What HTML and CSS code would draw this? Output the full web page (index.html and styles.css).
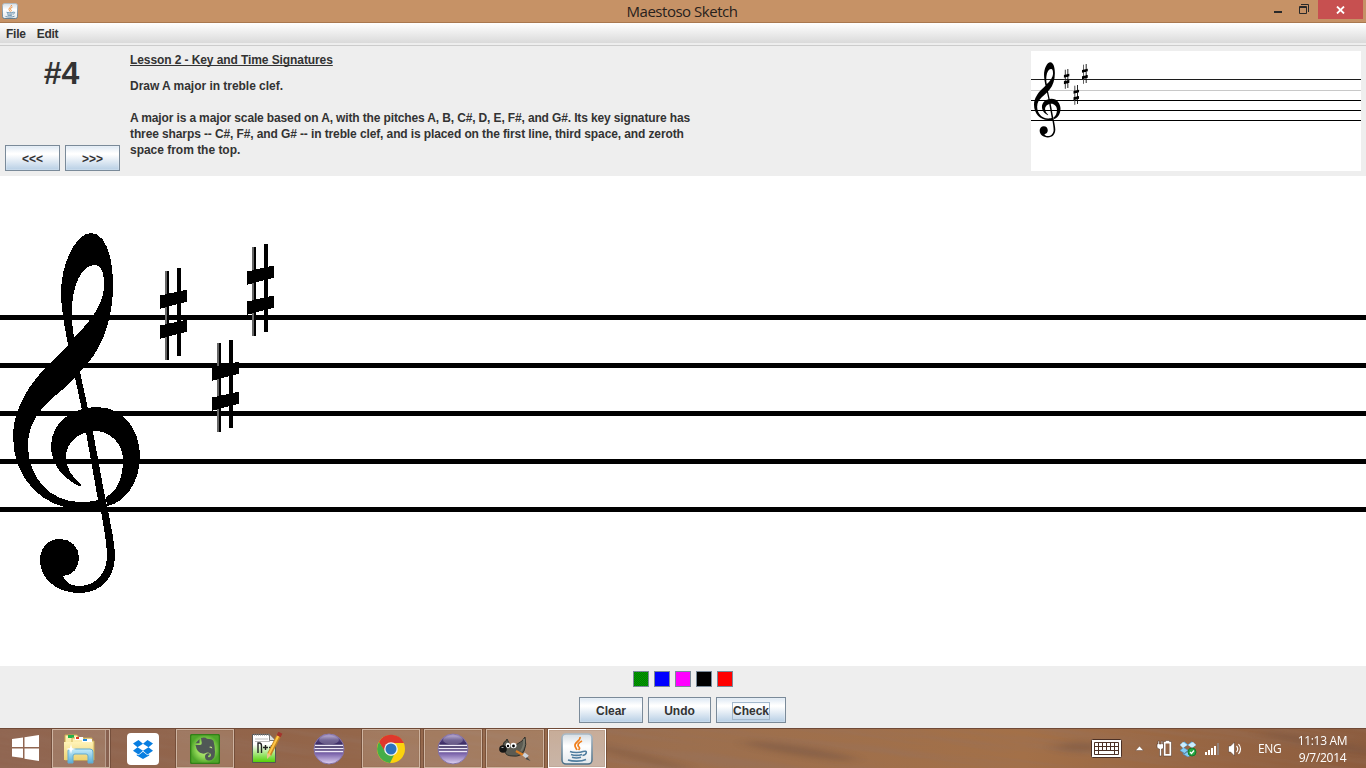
FILE: index.html
```html
<!DOCTYPE html>
<html lang="en">
<head>
<meta charset="utf-8">
<title>Maestoso Sketch</title>
<link rel="stylesheet" href="styles.css">
</head>
<body>
<svg class="defs" width="0" height="0" aria-hidden="true">
  <defs>
    <linearGradient id="metal" x1="0" y1="0" x2="0" y2="1"><stop offset="0" stop-color="#d5dde3"/><stop offset=".4" stop-color="#fff"/><stop offset="1" stop-color="#e3e8ec"/></linearGradient>
    <linearGradient id="edge" x1="0" y1="0" x2="0" y2="1"><stop offset="0" stop-color="#a9bac7"/><stop offset="1" stop-color="#4b7088"/></linearGradient>
    <linearGradient id="orb" x1="0" y1="0" x2="0" y2="1"><stop offset="0" stop-color="#b9a9d6"/><stop offset=".2" stop-color="#51407c"/><stop offset=".45" stop-color="#2b1d52"/><stop offset=".65" stop-color="#7a63aa"/><stop offset="1" stop-color="#e0d4f4"/></linearGradient>
    <linearGradient id="folder" x1="0" y1="0" x2="0" y2="1"><stop offset="0" stop-color="#fff3b8"/><stop offset="1" stop-color="#edd272"/></linearGradient>
    <linearGradient id="stand" x1="0" y1="0" x2="0" y2="1"><stop offset="0" stop-color="#c5ecfa"/><stop offset="1" stop-color="#5aaed6"/></linearGradient>
    <radialGradient id="leaf"><stop offset="0" stop-color="#d0f58c"/><stop offset=".6" stop-color="#8fd556"/><stop offset="1" stop-color="#4fa62a"/></radialGradient>
    <linearGradient id="page" x1="0" y1="0" x2="0" y2="1"><stop offset=".35" stop-color="#fff"/><stop offset="1" stop-color="#4fd000"/></linearGradient>
    <symbol id="java" viewBox="0 0 32 32">
      <rect x="1" y="1" width="30" height="30" rx="4" fill="url(#metal)" stroke="url(#edge)" stroke-width="1.6"/>
      <path d="M19 4c1 4-6 5-5 9 .3 1.500 1.500 2.500 2 4M21 8c-4 2-5 4-3 6 1 1 .5 2-.5 3" fill="none" stroke="#f0801e" stroke-width="1.700"/>
      <path d="M9 18.500c3 1.300 10 1.300 13 0M10 21.500c3 1 8 1 11 0M11 24.300c3 1 6 1 9 0M7 27c5 1.600 13 1.600 18-.5M22 18.500c5-1.500 4 3-.5 4" fill="none" stroke="#4f7d9f" stroke-width="1.600"/>
    </symbol>
    <symbol id="eclipse" viewBox="0 0 32 32">
      <circle cx="16" cy="16" r="15" fill="url(#orb)" stroke="#8675aa" stroke-width="1"/>
      <ellipse cx="16" cy="7" rx="10" ry="4.500" fill="#fff" opacity=".22"/>
      <path d="M2 12.500h28M1.500 15.500h29M2 18.500h28" stroke="#efeaf8" stroke-width="1.500"/>
    </symbol>
    <symbol id="clef" viewBox="0 0 150 600" overflow="visible">
      <path fill-rule="evenodd" d="M91 233C76 233 61 263 61 293C61 310 65 328 68 345L48 365C32 381 13 407 13 436C13 478 42 509 81 509L101 511C104 528 107 545 107 558C106 574 95 586 79 586C70 586 64 581 63 576C72 576 79 568 79 558C79 547 71 539 60 539C48 539 40 548 40 560C40 579 57 593 79 593C102 593 115 577 115 555C115 543 110 523 108 510L105 497L93 432L80 372L88 363C104 344 113 316 113 285C113 258 106 233 91 233ZM74 337C67 300 77 265 95 265C102 265 104 273 104 286C104 302 91 322 74 337ZM75 378L82 410L98 500C90 502 86 502 80 502C50 502 28 477 28 446C28 425 38 412 50 400Q64 389 75 378Z"/>
      <path d="M80 486.500C64 479 51 465 51 446C51 424 71 407 97 407C124 407 140 431 140 456C140 482 125 503 107 506L106 497C117 492 123 477 123 460C123 443 109 431 96 431C78 431 66 443 66 457C66 469 73 478 81 484.500Z"/>
    </symbol>
    <symbol id="sharp" viewBox="0 0 28 93">
      <path d="M6 3h3v89H6z"/><path d="M5 3h2v89H5z" fill="#666"/><path d="M17.400 0h4v88h-4zM0 27.500L27 21.500v12.200L0 40.700zM0 57.500L27 51.500v12.200L0 70.700z"/>
    </symbol>
    <symbol id="box" viewBox="0 0 20 18">
      <path d="M5.500 0L10 3.700 4.500 7.200 0 3.600zM14.500 0L20 3.600 15.500 7.200 10 3.700zM0 10.800L4.500 7.200 10 10.700 5.500 14.400zM20 10.800L15.500 7.200 10 10.700l4.500 3.700zM10 11.700l4.500 3.500 1.700-1v1.200L10 19l-6.200-3.600v-1.200l1.700 1z"/>
    </symbol>
  </defs>
</svg>
<div class="desktop">
  <header class="titlebar">
    <svg class="app-icon" width="16" height="16"><use href="#java"/></svg>
    <h1 class="title">Maestoso Sketch</h1>
    <div class="controls">
      <svg width="50" height="19" viewBox="0 0 50 19"><path d="M6 11h8v2H6z" fill="#292929"/><path d="M31.500 6.500h7v7h-7zM31 7.500h8M33 4.500h7.500V12" fill="none" stroke="#292929"/></svg>
      <div class="close"><svg width="9" height="8" viewBox="0 0 9 8"><path d="M1 .5l7 7M8 .5l-7 7" stroke="#fff" stroke-width="1.800"/></svg></div>
    </div>
  </header>
  <nav class="menubar"><span>File</span><span>Edit</span></nav>
  <section class="lesson">
    <div class="number-column">
      <div class="number">#4</div>
      <div class="nav"><button class="btn">&lt;&lt;&lt;</button><button class="btn">&gt;&gt;&gt;</button></div>
    </div>
    <div class="copy">
      <h2>Lesson 2 - Key and Time Signatures</h2>
      <p class="task">Draw A major in treble clef.</p>
      <p class="detail">A major is a major scale based on A, with the pitches A, B, C#, D, E, F#, and G#. Its key signature has<br><span class="middle">three sharps -- C#, F#, and G# -- in treble clef, and is placed on the first line, third space, and zeroth</span><br><span class="last">space from the top.</span></p>
    </div>
    <svg class="preview" width="330" height="120" viewBox="1031 51 330 120">
      <path d="M1031 79h330v1h-330z" fill="#1c1c1c"/><path d="M1031 90h330v1h-330z" fill="#c8c8c8"/><path d="M1031 100h330v1h-330zM1031 110h330v1h-330zM1031 120h330v1h-330z"/>
      <use href="#clef" x="1031.300" y="13.300" width="31.300" height="126"/>
      <use href="#sharp" x="1063.700" y="69" width="6" height="20"/>
      <use href="#sharp" x="1073.300" y="85" width="6" height="20"/>
      <use href="#sharp" x="1082" y="64" width="6" height="20"/>
    </svg>
  </section>
  <main class="canvas">
    <svg width="1366" height="490" viewBox="0 176 1366 490">
      <path d="M0 315h1366v5H0zM0 363h1366v5H0zM0 411h1366v5H0zM0 459h1366v5H0zM0 507h1366v5H0z"/>
      <use href="#clef" x="0" y="0" width="150" height="600"/>
      <use href="#sharp" x="160" y="268" width="28" height="93"/>
      <use href="#sharp" x="212" y="340" width="28" height="93"/>
      <use href="#sharp" x="247" y="244" width="28" height="93"/>
    </svg>
  </main>
  <section class="tools">
    <div class="swatches"><i class="green"></i><i class="blue"></i><i class="magenta"></i><i class="black"></i><i class="red"></i></div>
    <div class="actions"><button class="btn clear">Clear</button><button class="btn undo">Undo</button><button class="btn check"><span>Check</span></button></div>
  </section>
  <footer class="taskbar">
    <svg class="wood" width="1366" height="40" viewBox="0 0 1366 40">
      <defs>
        <linearGradient id="plank"><stop offset="0" stop-color="#906550"/><stop offset=".2" stop-color="#926449"/><stop offset=".5" stop-color="#9c6f4e"/><stop offset=".75" stop-color="#a37048"/><stop offset="1" stop-color="#8c5c3e"/></linearGradient>
        <filter id="grain" x="0" y="0" width="100%" height="100%"><feTurbulence type="fractalNoise" baseFrequency=".006 .13" numOctaves="4" seed="4"/><feColorMatrix values="0 0 0 0 .3  0 0 0 0 .17  0 0 0 0 .12  2.400 0 0 0 -.9"/></filter>
        <filter id="soft" x="-20%" y="-100%" width="140%" height="300%"><feGaussianBlur stdDeviation="8 2.500"/></filter>
      </defs>
      <path fill="url(#plank)" d="M0 0h1366v40H0z"/>
      <g transform="rotate(8 683 20)"><rect x="-20" y="-110" width="1410" height="260" filter="url(#grain)" opacity=".35"/></g>
      <g fill="#66483a" opacity=".32" filter="url(#soft)"><ellipse cx="640" cy="28" rx="50" ry="3" transform="rotate(14 640 28)"/><ellipse cx="800" cy="22" rx="55" ry="5" transform="rotate(9 800 22)"/><ellipse cx="1080" cy="18" rx="24" ry="5"/><ellipse cx="1320" cy="14" rx="60" ry="4" transform="rotate(10 1320 14)"/></g>
    </svg>
    <div class="start"><svg width="27" height="26" viewBox="0 0 27 26"><path d="M0 4l11-1.600V12H0zM12.500 2.200L27 0v12H12.500zM0 13.500h11V23L0 21.500zM12.500 13.500H27V26l-14.500-2.300z" fill="#fff"/></svg></div>
    <div class="apps">
      <div class="app open stacked"><svg width="33" height="31" viewBox="0 0 33 31">
        <path d="M2 2h12l2 3h13v22H2z" fill="url(#folder)" stroke="#c9a84e"/><path d="M5 2h6v3H5z" fill="#21b04b"/><path d="M9 5h12l2 3h8v19H9z" fill="url(#folder)" stroke="#cdb057"/><path d="M12 4h8v3h-8z" fill="#fff"/><path d="M13 4h3v2h-3z" fill="#e23b22"/><path d="M19 6h10v3H19z" fill="#fff"/><path d="M20 6h4v2h-4z" fill="#2188d8"/><path d="M1 9h28v18H1z" fill="url(#folder)"/>
        <path d="M5 18q0-2 2-2h20q3 0 3 3v11h-5v-7q0-2-2-2H12q-2 0-2 2v7H5z" fill="url(#stand)" stroke="#62abd0"/><path d="M8 11l1 4 4 1-4 1-1 4-1-4-4-1 4-1z" fill="#fff"/></svg></div>
      <div class="app"><svg width="32" height="32" viewBox="0 0 32 32"><rect width="32" height="32" rx="4" fill="#fff"/><use href="#box" x="6" y="6" width="20" height="20" fill="#087ee1"/></svg></div>
      <div class="app open"><svg width="30" height="30" viewBox="0 0 30 30"><rect x=".5" y=".5" width="29" height="29" rx="2" fill="url(#leaf)" stroke="#327f17" stroke-width="1.500"/><path d="M11 4q4-1.500 6 .8 5 0 6.500 2.200 1.500 5 1.500 11 0 8.500-6 8.500-4 0-4-4 0-3.500 4.500-3.500v2.200q-2-.2-1.500 1.500 1.500 1.500 3-1 .5-3-4-3.200-2 1.500-4.500 1-5.500-.5-7-8.500h4.500q1.800 0 1.800-2z" fill="#505856"/><path d="M5.500 9.300L9.500 5v4.300z" fill="#505856"/><path d="M19 13q3-1.500 3.300 1.500-2-1-3.300-1.500" fill="#c9ef8f"/></svg></div>
      <div class="app"><svg width="32" height="33" viewBox="0 0 32 33"><path d="M1.500 2.500h17l6 6v22h-23z" fill="url(#page)" stroke="#555"/><path d="M18.500 2.500v6h6" fill="#ddd" stroke="#777"/><path d="M3 2.500h16" stroke="#777" stroke-width="2" stroke-dasharray="1 1"/><path d="M4 7h13M4 9.500h15" stroke="#bbb"/><path d="M7 21v-10h1.500q2 0 2 3v7M12 15.500h5M14.500 13v5M18 15.500h5M20.500 13v5" fill="none" stroke="#222" stroke-width="1.400"/><path d="M28 3L18 23" stroke="#c48520" stroke-width="4.500"/><path d="M27.500 3.500L17.500 23" stroke="#ffc647" stroke-width="2"/><path d="M16 21l4 2-4 4z" fill="#e7c38c"/><path d="M26.500 1.500l4 2" stroke="#a3342d" stroke-width="4"/></svg></div>
      <div class="app"><svg width="32" height="32"><use href="#eclipse"/></svg></div>
      <div class="app open"><svg width="30" height="30" viewBox="0 0 30 30"><circle cx="15" cy="15" r="14" fill="#fbd20e"/><path d="M3 8A14 14 0 0 1 28 9H15L9 18z" fill="#df382c"/><path d="M3 8l7 11q3 4 8 2l-4 8A14 14 0 0 1 3 8" fill="#45ad48"/><circle cx="15" cy="15" r="6.800" fill="#eef4f6"/><circle cx="15" cy="15" r="5.500" fill="#2c72bd"/></svg></div>
      <div class="app open"><svg width="32" height="32"><use href="#eclipse"/></svg></div>
      <div class="app open"><svg width="32" height="26" viewBox="0 0 32 26"><path d="M8 3l3 6q7 1 12-4l3-4q2 8-1 14-3 6-11 5-7 0-8-4l-2-7q1-4 3-4z" fill="#5c5b52" stroke="#2f302b"/><path d="M25 3q1 7-3 12" fill="none" stroke="#78776a" stroke-width="2"/><ellipse cx="9" cy="9.500" rx="2.200" ry="2.700" fill="#fff"/><ellipse cx="14.500" cy="9.500" rx="3" ry="2.800" fill="#fff"/><circle cx="9" cy="10" r="1.200"/><circle cx="14.500" cy="10" r="1.400"/><circle cx="4" cy="13" r="3.800" fill="#151515"/><path d="M2.500 11.500h2" stroke="#aaa"/><path d="M17 15l9 5" stroke="#dc7c20" stroke-width="2.400"/><path d="M24.500 18l4 3" stroke="#ccd3dc" stroke-width="4" fill="none"/><path d="M28 21l3.500 4-5-2z" fill="#474744"/></svg></div>
      <div class="app open active"><svg width="32" height="32"><use href="#java"/></svg></div>
    </div>
    <div class="tray">
      <svg width="155" height="24" viewBox="1090 737 155 24">
        <rect x="1091.500" y="739.500" width="30" height="18" rx="1" fill="#fff" stroke="#4b3025"/><path d="M1094.500 742.500h24v12h-24zM1094 746.500h25M1094 750.500h25M1098.500 742v12M1102.500 742v8M1106.500 742v8M1110.500 742v8M1114.500 742v12" fill="none" stroke="#4b3025"/>
        <path d="M1135.500 750.500l4-4.500 4 4.500z" fill="#fff" stroke="#65483a" stroke-width=".5"/>
        <path d="M1163.500 741.500h2v-1h4v1h2v14.500h-8zM1158 741h1.300v3h2v-3h1.300v3h.9v4q0 1-2 1v7h-2v-7q-2.500 0-2.500-2v-3h1z" fill="#fff" stroke="#4b3025" stroke-width=".5"/><path d="M1165.500 743.500h4v10.500h-4z" fill="#936547"/>
        <use href="#box" x="1180" y="741" width="16" height="16" fill="#82ccf6" stroke="#468bc0" stroke-width=".7"/><path d="M1183 742l4 3-4 3-3-3zM1193 742l3 3-4 3-4-3z" fill="#cceeff"/><circle cx="1192" cy="752" r="4" fill="#26a642" stroke="#147b29"/><path d="M1190 752l1.500 1.500 2.500-3" fill="none" stroke="#fff" stroke-width="1.200"/>
        <path d="M1205 752h2v3h-2zM1208 750h2v5h-2zM1211 748h2v7h-2zM1214 746h2v9h-2z" fill="#fff"/><path d="M1217 743h2v12h-2z" fill="#91817a"/>
        <path d="M1228.500 746h2l4-4v14l-4-4h-2z" fill="#fff" stroke="#4b3025" stroke-width=".5"/><path d="M1236.500 746q2.500 3 0 6M1238.500 744q4 5 0 10" fill="none" stroke="#fff" stroke-width="1.200"/>
      </svg>
      <span class="language">ENG</span>
      <div class="clock"><span>11:13 AM</span><span>9/7/2014</span></div>
    </div>
  </footer>
</div>
</body>
</html>
```
FILE: styles.css
```css
* { box-sizing: border-box; }
body { margin: 0; overflow: hidden; }
.defs { position: absolute; }
.desktop { display: flex; flex-direction: column; width: 1366px; height: 768px; background: #eee; font: bold 12px/16px "Liberation Sans", Arial, sans-serif; color: #333; }
.desktop svg { display: block; flex: none; }
.titlebar { display: grid; grid-template-columns: 120px 1fr 120px; height: 23px; flex: none; background: #c69266; border-bottom: 1px solid #a9784f; }
.app-icon { margin: 3px 0 0 2px; }
.title { margin: 0; padding-right: 2px; text-align: center; font: 400 15px/23px "Open Sans", "Noto Sans", sans-serif; color: #28211c; letter-spacing: -.48px; }
.controls { display: flex; justify-content: flex-end; padding-right: 3px; }
.close { width: 45px; height: 19px; background: #c75050; display: flex; align-items: center; justify-content: center; }
.menubar { display: flex; gap: 11px; height: 23px; flex: none; padding: 3px 6px; background: linear-gradient(#fff, #dadada 20px, #eee 20px, #eee 22px); border-bottom: 1px solid #ccc; letter-spacing: -.25px; }
.lesson { display: flex; height: 130px; flex: none; padding: 5px; }
.number-column { width: 115px; display: flex; flex-direction: column; justify-content: space-between; }
.number { width: 113px; font-size: 32px; line-height: 44px; text-align: center; }
.nav { display: flex; gap: 5px; }
.nav .btn { width: 55px; }
.btn { height: 26px; padding: 1px 0 0; border: 1px solid #7a8a99; background: linear-gradient(#dde8f3, #fff 30%, #fff 35%, #b8cfe5); font: bold 12px/16px "Liberation Sans", Arial, sans-serif; color: #333; box-shadow: inset 0 0 0 1px rgba(255, 255, 255, .2); }
.copy { margin-left: 10px; flex: 1; white-space: nowrap; padding-top: 1px; }
.copy h2, .copy p { margin: 0; font-size: 12px; line-height: 16px; }
.copy h2 { text-decoration: underline; text-decoration-skip-ink: none; letter-spacing: -.09px; }
.copy .task { margin: 10px 0 16px; letter-spacing: -.03px; }
.copy .detail { letter-spacing: -.138px; }
.detail .middle { letter-spacing: -.11px; }
.detail .last { letter-spacing: -.02px; }
.preview { background: #fff; }
.canvas { height: 490px; flex: none; background: #fff; }
.canvas svg { shape-rendering: crispEdges; }
.tools { height: 62px; flex: none; padding-top: 5px; }
.swatches { display: flex; justify-content: center; gap: 5px; height: 16px; }
.swatches i { width: 16px; height: 16px; border: 1px solid #7a8a99; }
.green { background: repeating-conic-gradient(#007800 0 25%, #00a000 0 50%) 0 0 / 2px 2px; }
.blue { background: #00f; }
.magenta { background: #f0f; }
.black { background: #000; }
.red { background: #f00; }
.actions { display: flex; justify-content: center; gap: 5px; margin: 10px 1px 0 0; }
.clear { width: 64px; }
.undo { width: 63px; }
.check { width: 70px; }
.check span { display: inline-block; outline: 1px solid #a3b8cc; }
.taskbar { position: relative; display: flex; height: 40px; flex: none; overflow: hidden; border-top: 1px solid #704a37; }
.taskbar .wood { position: absolute; left: 0; top: 0; }
.start { position: relative; width: 52px; padding: 6px 0 0 12px; }
.apps { position: relative; display: flex; gap: 4px; flex: none; }
.app { width: 58px; height: 39px; display: flex; align-items: center; justify-content: center; }
.open { border: 1px solid rgba(230, 210, 195, .65); background: rgba(215, 198, 180, .2); box-shadow: inset 0 0 0 1px rgba(120, 80, 60, .12), 0 0 0 1px rgba(75, 45, 30, .4); }
.stacked { box-shadow: inset -3px 0 #886150, inset -4px 0 #b89d8d, 0 0 0 1px rgba(75, 45, 30, .4); padding-right: 3px; }
.active { border-color: #fff; background: linear-gradient(rgba(215, 194, 178, .75), rgba(218, 206, 198, .75)); }
.tray { position: relative; display: flex; margin-left: auto; padding-right: 11px; color: #fff; font: 400 12px/17px "Open Sans", "Noto Sans", sans-serif; }
.tray svg { margin-top: 8px; }
.language { width: 30px; margin: 11px 0 0 13px; letter-spacing: -.4px; }
.clock { width: 67px; display: flex; flex-direction: column; text-align: center; padding: 3px 0 0 2px; letter-spacing: -.3px; }
```
